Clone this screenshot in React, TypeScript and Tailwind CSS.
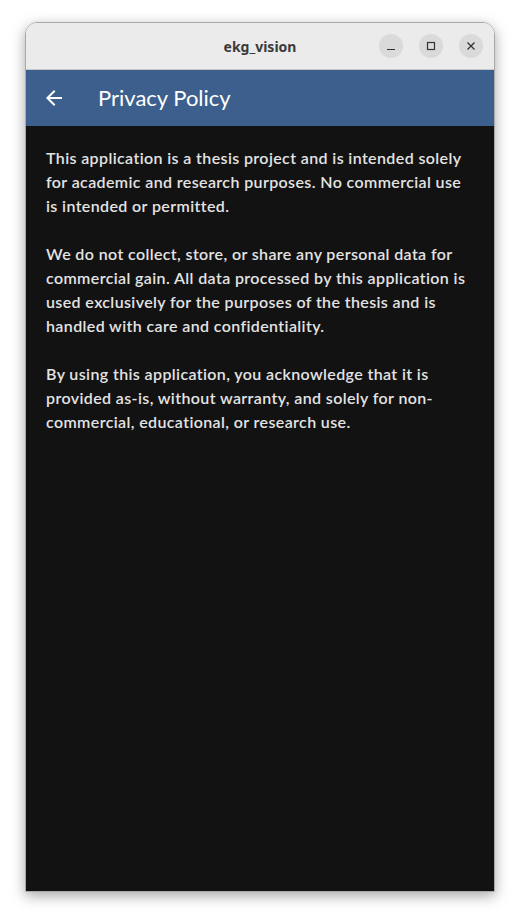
import React from "react";

export default function App() {
  return (
    <div className="w-[520px] h-[920px] bg-white pt-[22px] pl-[25px]">
      <div className="w-[470px] h-[870px] flex flex-col rounded-t-[12px] border border-[#a8a8a8] overflow-hidden shadow-[0_4px_14px_rgba(0,0,0,0.35)]">
        <div className="h-[47px] shrink-0 bg-[#ebebeb] border-b border-[#c8c8c8] flex items-center relative">
          <div className="absolute left-0 right-0 text-center text-[14px] font-bold text-[#3a3a3a] [font-family:'Noto_Sans',sans-serif]">
            ekg_vision
          </div>
          <div className="ml-auto mr-[11px] flex gap-[16px] relative">
            <div className="w-[24px] h-[24px] rounded-full bg-[#dadada] flex items-center justify-center">
              <svg width="10" height="10" viewBox="0 0 10 10"><path d="M1 8.5h8" stroke="#333" strokeWidth="1.2" /></svg>
            </div>
            <div className="w-[24px] h-[24px] rounded-full bg-[#dadada] flex items-center justify-center">
              <svg width="10" height="10" viewBox="0 0 10 10"><rect x="1.5" y="1.5" width="7" height="7" fill="none" stroke="#333" strokeWidth="1.2" /></svg>
            </div>
            <div className="w-[24px] h-[24px] rounded-full bg-[#dadada] flex items-center justify-center">
              <svg width="10" height="10" viewBox="0 0 10 10"><path d="M1.5 1.5l7 7M8.5 1.5l-7 7" stroke="#333" strokeWidth="1.3" /></svg>
            </div>
          </div>
        </div>
        <div className="h-[56px] shrink-0 bg-[#3d5f8e] flex items-center [font-family:Lato,sans-serif]">
          <div className="w-[72px] pl-[16px] flex items-center">
            <svg width="24" height="24" viewBox="0 0 24 24">
              <path d="M20 11H7.83l5.59-5.59L12 4l-8 8 8 8 1.41-1.41L7.83 13H20v-2z" fill="#fff" />
            </svg>
          </div>
          <div className="text-[22px] text-white leading-none">Privacy Policy</div>
        </div>
        <div className="flex-1 bg-[#121212] px-[20px] pt-[20px] text-[16px] leading-[24px] tracking-[0.38px] text-[#e3e3e3] font-semibold [font-family:Lato,sans-serif]">
          <p>
            This application is a thesis project and is intended solely for academic and research purposes. No commercial use is intended or permitted.
          </p>
          <p className="mt-[24px]">
            We do not collect, store, or share any personal data for commercial gain. All data processed by this application is used exclusively for the purposes of the thesis and is handled with care and confidentiality.
          </p>
          <p className="mt-[24px]">
            By using this application, you acknowledge that it is provided as-is, without warranty, and solely for non-commercial, educational, or research use.
          </p>
        </div>
      </div>
    </div>
  );
}
